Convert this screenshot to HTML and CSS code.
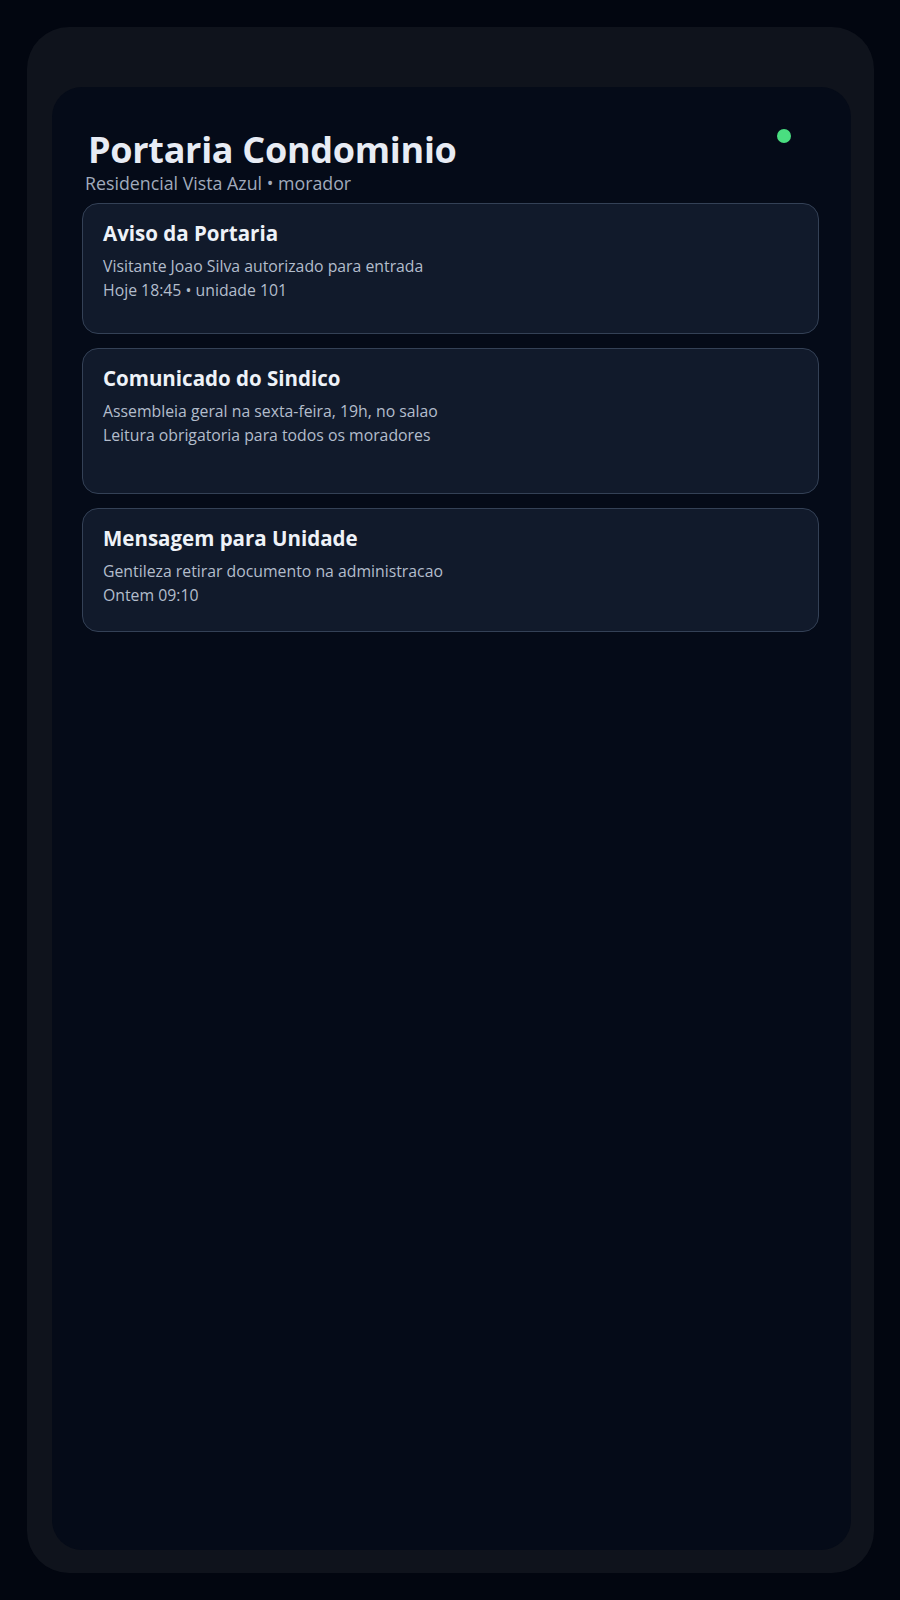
FILE: index.html
```html
<!DOCTYPE html>
<html lang="pt-BR">
<head>
<meta charset="utf-8">
<title>Portaria Condominio</title>
<link rel="stylesheet" href="styles.css">
</head>
<body>
<div class="device">
  <main class="screen">
    <header class="header">
      <div class="heading">
        <h1 class="title">Portaria Condominio</h1>
        <p class="subtitle">Residencial Vista Azul • morador</p>
      </div>
      <span class="status-dot"></span>
    </header>
    <section class="list">
      <article class="card card-a">
        <h2 class="card-title">Aviso da Portaria</h2>
        <p class="card-line">Visitante Joao Silva autorizado para entrada</p>
        <p class="card-line">Hoje 18:45 • unidade 101</p>
      </article>
      <article class="card card-b">
        <h2 class="card-title">Comunicado do Sindico</h2>
        <p class="card-line">Assembleia geral na sexta-feira, 19h, no salao</p>
        <p class="card-line">Leitura obrigatoria para todos os moradores</p>
      </article>
      <article class="card card-c">
        <h2 class="card-title">Mensagem para Unidade</h2>
        <p class="card-line">Gentileza retirar documento na administracao</p>
        <p class="card-line">Ontem 09:10</p>
      </article>
    </section>
  </main>
</div>
</body>
</html>
```

FILE: styles.css
```css
* { box-sizing: border-box; }

html, body {
  margin: 0;
  padding: 0;
  background: #020610;
}

body {
  font-family: "Open Sans", "Noto Sans", sans-serif;
  color: #e6ebf3;
  padding: 27px 26px 27px 27px;
}

.device {
  height: 1546px;
  background: #0f131c;
  border-radius: 42px;
  padding: 60px 23px 23px 25px;
}

.screen {
  height: 100%;
  background: #050b18;
  border-radius: 30px;
  padding: 41px 32px 30px 30px;
}

.header {
  display: flex;
  justify-content: space-between;
  align-items: flex-start;
  padding-right: 28px;
}

.title {
  margin: 0;
  padding-left: 6px;
  font-size: 36px;
  font-weight: 700;
  line-height: 44px;
  color: #e8ecf4;
  letter-spacing: -0.3px;
}

.subtitle {
  margin: 0;
  padding-left: 3px;
  font-size: 17.8px;
  line-height: 22px;
  color: #a0aabc;
}

.status-dot {
  width: 14px;
  height: 14px;
  border-radius: 50%;
  background: #4ade80;
  margin-top: 1px;
}

.list {
  margin-top: 9px;
  display: flex;
  flex-direction: column;
  gap: 14px;
}

.card {
  background: #111a2b;
  border: 1px solid #344156;
  border-radius: 16px;
  padding: 14px 20px 20px;
}

.card-a { min-height: 131px; }
.card-b { min-height: 146px; }
.card-c { min-height: 124px; }

.card-title {
  margin: 0 0 6px;
  font-size: 20.5px;
  font-weight: 700;
  line-height: 30px;
  color: #eef2f8;
}

.card-line {
  margin: 0;
  font-size: 15.8px;
  line-height: 24px;
  color: #b3bdcc;
}
```
